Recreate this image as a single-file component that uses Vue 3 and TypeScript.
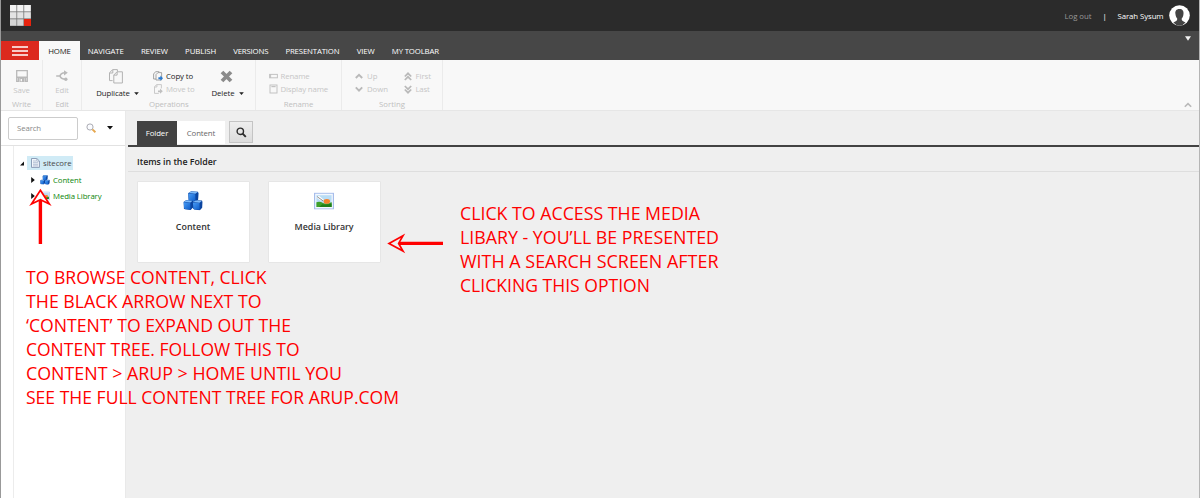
<script setup lang="ts">
import type { Directive } from 'vue'

interface Tab { label: string; width: number }
interface Line { text: string; width: number }

/* Tracks a label so that it spans the given width in pixels. */
const vFit: Directive<HTMLElement, number> = {
  mounted(el, binding) {
    const apply = () => {
      el.style.letterSpacing = '0px'
      const natural = el.getBoundingClientRect().width
      const count = (el.textContent ?? '').length
      const spacing = (binding.value - natural) / count
      el.style.letterSpacing = `${spacing.toFixed(3)}px`
    }
    apply()
    document.fonts.ready.then(apply)
  },
}

const tabs: Tab[] = [
  { label: 'NAVIGATE', width: 36 },
  { label: 'REVIEW', width: 27 },
  { label: 'PUBLISH', width: 31 },
  { label: 'VERSIONS', width: 35 },
  { label: 'PRESENTATION', width: 54 },
  { label: 'VIEW', width: 18 },
  { label: 'MY TOOLBAR', width: 47 },
]

const browseNote: Line[] = [
  { text: 'TO BROWSE CONTENT, CLICK', width: 240.5 },
  { text: 'THE BLACK ARROW NEXT TO', width: 235.5 },
  { text: '‘CONTENT’ TO EXPAND OUT THE', width: 265 },
  { text: 'CONTENT TREE. FOLLOW THIS TO', width: 273.5 },
  { text: 'CONTENT > ARUP > HOME UNTIL YOU', width: 316 },
  { text: 'SEE THE FULL CONTENT TREE FOR ARUP.COM', width: 373 },
]

const mediaNote: Line[] = [
  { text: 'CLICK TO ACCESS THE MEDIA', width: 240 },
  { text: 'LIBARY - YOU’LL BE PRESENTED', width: 259 },
  { text: 'WITH A SEARCH SCREEN AFTER', width: 258.5 },
  { text: 'CLICKING THIS OPTION', width: 190 },
]
</script>

<template>
  <div class="window">
    <svg class="defs" width="0" height="0">
      <defs>
        <linearGradient id="cubeFront" x1="0" y1="0" x2="1" y2="1">
          <stop offset="0" stop-color="#4a9cf5" />
          <stop offset="1" stop-color="#0d5cc8" />
        </linearGradient>
        <symbol id="cube" viewBox="0 0 10 10">
          <path d="M0.3 2 L3 0.2 L9.2 0.6 L9.8 2 L9.4 7.4 L7.2 9.8 L1.6 9.2 L0.7 8.2 Z" fill="#0b45a0" />
          <path d="M0.5 2.3 L6.8 2.9 L7 9.4 L1.6 8.9 L0.9 8 Z" fill="url(#cubeFront)" />
          <path d="M0.8 1.9 L3.1 0.5 L9 0.9 L6.9 2.6 Z" fill="#7dbbfb" />
        </symbol>
        <symbol id="cubes" viewBox="0 0 20 20">
          <use href="#cube" x="4.6" y="0" width="11.4" height="11" />
          <use href="#cube" x="0.2" y="8.8" width="10.4" height="10.4" />
          <use href="#cube" x="9.4" y="8.8" width="10.4" height="10.8" />
        </symbol>
        <symbol id="picture" viewBox="0 0 20 17">
          <rect x="0.6" y="0.6" width="18.8" height="15.8" fill="#f4f8ff" stroke="#a3baea" stroke-width="1.1" />
          <rect x="2.4" y="2.6" width="15.2" height="11.8" fill="#b9ddf5" />
          <path d="M2.4 5 L5 3.2 L10 7.4 L6.5 8 Z" fill="#fff" />
          <path d="M3 4 L9 8.2" stroke="#777" stroke-width="0.8" />
          <path d="M2.4 14.4 V9.6 Q6 8.4 9 10.4 Q14 11.8 17.6 9.4 V14.4 Z" fill="#3fa02a" />
          <ellipse cx="12.8" cy="8.8" rx="3.2" ry="2.4" fill="#f5812a" />
          <path d="M8.4 11.6 Q13.5 12.6 17.6 10.6 V14.4 H5 Z" fill="#217e19" />
        </symbol>
      </defs>
    </svg>

    <header class="topbar">
      <svg class="logo" width="21" height="21" viewBox="0 0 21 21">
        <rect width="21" height="21" fill="#777" />
        <g fill="#f3f3f3">
          <rect x="0" y="0" width="6.4" height="6.4" /><rect x="7.2" y="0" width="6.2" height="6.4" /><rect x="14.2" y="0" width="6.6" height="6.4" />
        </g>
        <g fill="#e3e3e3">
          <rect x="0" y="7.2" width="6.4" height="6.2" /><rect x="7.2" y="7.2" width="6.2" height="6.2" /><rect x="14.2" y="7.2" width="6.6" height="6.2" />
        </g>
        <g fill="#d6d6d6">
          <rect x="0" y="14.3" width="6.4" height="6.4" /><rect x="7.2" y="14.3" width="6.2" height="6.4" />
        </g>
        <rect x="14" y="14" width="7" height="7" fill="#e6240f" />
      </svg>
      <div class="account">
        <span v-fit="27" class="logout">Log out</span>
        <span class="bar">|</span>
        <span v-fit="46" class="user">Sarah Sysum</span>
        <svg class="avatar" width="21" height="21" viewBox="0 0 21 21">
          <circle cx="10.5" cy="10.5" r="10.3" fill="#fff" />
          <path d="M10.4 4 C7.1 4 6 6.3 6.4 8.8 C6.7 11.4 7.4 12.6 8.2 13.6 C8.5 15.4 7.4 16.2 4.4 17.4 Q7 20.6 10.5 20.8 Q14 20.6 16.5 17.4 C13.6 16.2 12.4 15.4 12.7 13.6 C13.6 12.5 14.3 11.4 14.5 8.8 C14.8 6.1 13.6 4 10.4 4 Z" fill="#444" />
        </svg>
      </div>
    </header>

    <nav class="tabbar">
      <button class="menu" aria-label="Menu">
        <svg width="16" height="10" viewBox="0 0 16 10">
          <path d="M0 1 H16 M0 5 H16 M0 9 H16" stroke="#fff" stroke-width="1.5" />
        </svg>
      </button>
      <div class="tab-home"><span v-fit="22.5">HOME</span></div>
      <div class="tabs">
        <span v-for="t in tabs" :key="t.label" v-fit="t.width">{{ t.label }}</span>
      </div>
      <svg class="tabbar-caret" width="6" height="5" viewBox="0 0 6 5"><path d="M0 0.3 H6 L3 4.8 Z" fill="#f2f2f2" /></svg>
    </nav>

    <section class="ribbon">
      <div class="group write">
        <div class="big muted">
          <svg width="12" height="12" viewBox="0 0 12 12">
            <path d="M0.7 0.7 H11.3 V11.3 H9.6 V7.6 H2.4 V11.3 H0.7 Z" fill="#f8f8f8" stroke="#b9b9b9" stroke-width="1.3" />
            <path d="M1 6.4 H11 V8 H1 Z M3.4 8 H8.6 V12 H3.4 Z M4.6 9 V11.2 H6 V9 Z" fill="#b9b9b9" fill-rule="evenodd" />
          </svg>
          <span v-fit="16.5">Save</span>
        </div>
        <div class="caption"><span v-fit="19">Write</span></div>
      </div>
      <div class="group edit">
        <div class="big muted">
          <svg width="12" height="12" viewBox="0 0 12 12">
            <path d="M0.2 6 H4 Q5 2.8 8.8 2.8 M4 6 Q5 9.2 9.6 9.2" fill="none" stroke="#b9b9b9" stroke-width="1.6" />
            <path d="M8 0.2 L11.8 2.8 L8 5.4 Z" fill="#b9b9b9" /><circle cx="9.8" cy="9.2" r="1.7" fill="#b9b9b9" />
          </svg>
          <span v-fit="13.5">Edit</span>
        </div>
        <div class="caption"><span v-fit="13">Edit</span></div>
      </div>
      <div class="group operations">
        <div class="ops">
          <div class="big dark duplicate">
            <svg width="14" height="15" viewBox="0 0 14 15" fill="#f8f8f8" stroke="#b3b3b3" stroke-width="1">
              <path d="M3.6 11.6 H0.5 V3.8 L3.6 0.6 H8.4 V2.6 M0.7 4 H3.8 V0.8" />
              <path d="M8 2.8 H13.4 V14 H4.8 V6 Z M4.9 6.1 H8.1 V2.9" />
            </svg>
            <div class="with-caret">
              <span v-fit="33.5">Duplicate</span>
              <svg width="5" height="3" viewBox="0 0 5 3"><path d="M0.2 0.2 H4.8 L2.5 2.9 Z" fill="#222" /></svg>
            </div>
          </div>
          <div class="stack copy">
            <div class="row dark">
              <svg width="10" height="10" viewBox="0 0 10 10">
                <path d="M3 8 H0.6 V3 L2.6 0.7 H6.3 M5 1.6 H8.6 V9 H3 V3.6 Z" fill="none" stroke="#9a9a9a" stroke-width="0.9" />
                <path d="M5.4 6.2 H7.4 V4.6 L10 7.2 L7.4 9.8 V8.2 H5.4 Z" fill="#2879ce" />
              </svg>
              <span v-fit="27">Copy to</span>
            </div>
            <div class="row muted">
              <svg width="10" height="10" viewBox="0 0 10 10">
                <path d="M5.8 9.4 H1.5 V2.8 L3.6 0.6 H8.4 V4.4 M1.6 3 H3.9 V0.7" fill="none" stroke="#c4c4c4" stroke-width="0.9" />
                <path d="M5 6.4 H7 V4.6 L9.8 7.2 L7 9.8 V8.2 H5 Z" fill="#c0c0c0" />
              </svg>
              <span v-fit="28.5">Move to</span>
            </div>
          </div>
          <div class="big dark delete">
            <svg width="13" height="13" viewBox="0 0 13 13"><path d="M2 2 L11 11 M11 2 L2 11" stroke="#8b8b8b" stroke-width="3.8" /></svg>
            <div class="with-caret">
              <span v-fit="23">Delete</span>
              <svg width="5" height="3" viewBox="0 0 5 3"><path d="M0.2 0.2 H4.8 L2.5 2.9 Z" fill="#222" /></svg>
            </div>
          </div>
        </div>
        <div class="caption"><span v-fit="39.5">Operations</span></div>
      </div>
      <div class="group rename">
        <div class="stack">
          <div class="row muted">
            <svg width="9" height="10" viewBox="0 0 9 10"><rect x="0.6" y="3.4" width="7.8" height="3.4" fill="none" stroke="#c2c2c2" stroke-width="1" /><path d="M1.6 3 V7" stroke="#c2c2c2" /></svg>
            <span v-fit="29">Rename</span>
          </div>
          <div class="row muted">
            <svg width="9" height="10" viewBox="0 0 9 10"><rect x="1" y="1" width="7" height="8" fill="none" stroke="#c2c2c2" stroke-width="1" /><path d="M2.4 2.6 H6.6" stroke="#c2c2c2" stroke-width="1.2" /></svg>
            <span v-fit="47.5">Display name</span>
          </div>
        </div>
        <div class="caption"><span v-fit="29.5">Rename</span></div>
      </div>
      <div class="group sorting">
        <div class="sort">
          <div class="stack">
            <div class="row muted">
              <svg width="8" height="8" viewBox="0 0 8 8"><path d="M0.8 6 L4 2.8 L7.2 6" fill="none" stroke="#b9b9b9" stroke-width="1.9" /></svg>
              <span v-fit="10.5">Up</span>
            </div>
            <div class="row muted">
              <svg width="8" height="8" viewBox="0 0 8 8"><path d="M0.8 2.4 L4 5.6 L7.2 2.4" fill="none" stroke="#b9b9b9" stroke-width="1.9" /></svg>
              <span v-fit="21">Down</span>
            </div>
          </div>
          <div class="stack">
            <div class="row muted">
              <svg width="8" height="9" viewBox="0 0 8 9"><path d="M0.8 4.5 L4 1.3 L7.2 4.5 M0.8 8 L4 4.8 L7.2 8" fill="none" stroke="#b9b9b9" stroke-width="1.7" /></svg>
              <span v-fit="15.5">First</span>
            </div>
            <div class="row muted">
              <svg width="8" height="9" viewBox="0 0 8 9"><path d="M0.8 1 L4 4.2 L7.2 1 M0.8 4.5 L4 7.7 L7.2 4.5" fill="none" stroke="#b9b9b9" stroke-width="1.7" /></svg>
              <span v-fit="14">Last</span>
            </div>
          </div>
        </div>
        <div class="caption"><span v-fit="26">Sorting</span></div>
      </div>
      <svg class="collapse" width="8" height="6" viewBox="0 0 8 6"><path d="M0.8 4.8 L4 1.6 L7.2 4.8" fill="none" stroke="#b9b9b9" stroke-width="1.6" /></svg>
    </section>

    <div class="body">
      <aside class="sidebar">
        <div class="searchbar">
          <div class="search-input"><span v-fit="24">Search</span></div>
          <svg class="glass" width="11" height="11" viewBox="0 0 11 11">
            <circle cx="4" cy="4" r="3.1" fill="#fbfcff" stroke="#a0a2aa" stroke-width="0.9" />
            <path d="M6.4 6.4 L9.4 9.2" stroke="#e6a74e" stroke-width="1.9" />
          </svg>
          <svg class="options" width="6" height="4" viewBox="0 0 6 4"><path d="M0 0 H6 L3 3.6 Z" fill="#111" /></svg>
        </div>
        <div class="tree">
          <div class="node root">
            <svg class="toggle" width="4" height="5" viewBox="0 0 4 5"><path d="M4 0.4 V4.6 H0 Z" fill="#111" /></svg>
            <div class="selected">
              <svg width="9" height="10" viewBox="0 0 9 10">
                <path d="M0.5 0.5 H5.8 L8.4 3 V9.4 H0.5 Z" fill="#f4f7fc" stroke="#8294b0" stroke-width="0.9" />
                <path d="M2 3 H5 M2 4.7 H7 M2 6.3 H7 M2 7.9 H7 M5.7 0.7 V3.2 H8.2" fill="none" stroke="#9aabc4" stroke-width="0.7" />
              </svg>
              <span v-fit="28.5">sitecore</span>
            </div>
          </div>
          <div class="node child">
            <svg class="toggle" width="4" height="6" viewBox="0 0 4 6"><path d="M0.2 0 L3.8 3 L0.2 6 Z" fill="#111" /></svg>
            <svg width="10" height="10"><use href="#cubes" width="10" height="10" /></svg>
            <span v-fit="28.5">Content</span>
          </div>
          <div class="node child">
            <svg class="toggle" width="4" height="6" viewBox="0 0 4 6"><path d="M0.2 0 L3.8 3 L0.2 6 Z" fill="#111" /></svg>
            <svg width="10" height="10"><use href="#picture" width="10" height="10" /></svg>
            <span v-fit="48.5">Media Library</span>
          </div>
        </div>
      </aside>

      <main class="content">
        <div class="editor-tabs">
          <div class="etab active"><span v-fit="22.5">Folder</span></div>
          <div class="etab"><span v-fit="28.5">Content</span></div>
          <button class="find" aria-label="Search">
            <svg width="11" height="11" viewBox="0 0 11 11"><circle cx="4.3" cy="4.3" r="3.2" fill="none" stroke="#2c2c2c" stroke-width="1.4" /><path d="M6.6 6.6 L9.8 9.8" stroke="#2c2c2c" stroke-width="1.9" /></svg>
          </button>
        </div>
        <h2 class="heading"><span v-fit="79.5">Items in the Folder</span></h2>
        <div class="cards">
          <div class="card">
            <svg class="card-icon" width="20" height="20"><use href="#cubes" width="20" height="20" /></svg>
            <span v-fit="34.5">Content</span>
          </div>
          <div class="card">
            <svg class="card-icon" width="20" height="20"><use href="#picture" y="1.6" width="20" height="17" /></svg>
            <span v-fit="59">Media Library</span>
          </div>
        </div>
      </main>
    </div>

    <svg class="notes" width="1200" height="498" viewBox="0 0 1200 498">
      <g class="note">
        <text v-for="(l, i) in browseNote" :key="l.text" x="26" :y="284 + i * 24" :textLength="l.width" lengthAdjust="spacingAndGlyphs">{{ l.text }}</text>
      </g>
      <g class="note">
        <text v-for="(l, i) in mediaNote" :key="l.text" x="460" :y="220 + i * 24" :textLength="l.width" lengthAdjust="spacingAndGlyphs">{{ l.text }}</text>
      </g>
      <g class="arrow">
        <path d="M40.4 190.3 L49.3 204 L40.4 199.8 L31.5 204 Z" /><path class="shaft" d="M40.4 200 V244" />
        <path class="on-grey" d="M389 243.4 L403 235.8 L398.6 243.4 L403 251 Z" /><path class="shaft" d="M399 243.4 H443" />
      </g>
    </svg>
  </div>
</template>

<style>
body { margin: 0; overflow: hidden; }
</style>

<style scoped>
.window {
  position: relative;
  box-sizing: border-box;
  width: 1200px;
  height: 498px;
  display: flex;
  flex-direction: column;
  border-left: 1px solid #999;
  border-right: 1px solid #b5b5b5;
  background: #efefef;
  overflow: hidden;
  font-family: "Open Sans", "Noto Sans", sans-serif;
  font-size: 7.8px;
  line-height: 10px;
  white-space: nowrap;
}
.window * { box-sizing: border-box; }
.window svg { display: block; flex: none; }
.window svg.defs { position: absolute; }
button { border: 0; padding: 0; display: flex; align-items: center; justify-content: center; }

.topbar {
  flex: none;
  height: 31px;
  display: flex;
  justify-content: space-between;
  padding: 5px 9px 0 9px;
  background: #2b2b2b;
}
.account { display: flex; align-items: center; height: 21px; color: #fff; }
.logout { color: #999; }
.bar { width: 4px; margin: 0 11px; text-align: center; }
.avatar { margin-left: 5.5px; }

.tabbar { flex: none; height: 29px; display: flex; align-items: flex-end; background: #474747; color: #fff; }
.menu { width: 38px; height: 19px; background: #dc291e; }
.tab-home { width: 41px; height: 19px; display: flex; align-items: center; justify-content: center; background: #f8f8f8; color: #222; }
.tabs { flex: 1; height: 19px; display: flex; align-items: center; gap: 17.2px; padding-left: 7.7px; }
.tabbar-caret { align-self: flex-start; margin: 5px 8px 0 0; }

.ribbon { position: relative; flex: none; height: 51px; display: flex; background: #f8f8f8; border-bottom: 1px solid #e6e6e6; }
.group { height: 50px; border-right: 1px solid #ebebeb; display: flex; flex-direction: column; justify-content: space-between; padding-bottom: 1px; }
.write { width: 42px; }
.edit { width: 39px; }
.operations { width: 174px; }
.rename { width: 86px; }
.sorting { width: 101px; }
.caption { height: 10px; display: flex; justify-content: center; color: #bfbfbf; }
.operations .caption { justify-content: flex-start; padding-left: 67px; }
.muted { color: #c6c6c6; }
.dark { color: #222; }
.big { height: 36px; padding-top: 10px; display: flex; flex-direction: column; align-items: center; gap: 3px; }
.ops { display: flex; height: 38px; }
.duplicate { width: 43px; margin-left: 14px; padding-top: 9px; gap: 4px; }
.duplicate > svg { margin-right: 3px; }
.delete { width: 33px; margin-left: 16px; padding-top: 10px; gap: 5px; }
.delete > svg { margin-right: 3px; }
.with-caret { display: flex; align-items: center; gap: 4px; }
.stack { display: flex; flex-direction: column; gap: 3px; padding-top: 11px; }
.copy { margin-left: 14px; width: 42px; }
.row { height: 10px; display: flex; align-items: center; gap: 3px; }
.rename .stack { padding-left: 12.5px; }
.sort { display: flex; gap: 15.5px; padding-left: 13px; }
.sort .row { gap: 4px; }
.collapse { position: absolute; right: 7px; bottom: 2px; }

.body { flex: 1; display: flex; min-height: 0; }
.sidebar { width: 125px; display: flex; flex-direction: column; background: #fff; border-right: 1px solid #e9e9e9; }
.searchbar { flex: none; height: 35px; display: flex; align-items: center; padding-left: 7px; border-bottom: 1px solid #e2e2e2; }
.search-input { width: 70px; height: 23px; display: flex; align-items: center; padding-left: 8px; border: 1px solid #ccc; border-radius: 2px; color: #888; }
.glass { margin: 0 10px 0 8px; }
.tree { flex: 1; margin-left: 12px; border-left: 1px solid #ececec; padding-top: 10px; }
.node { display: flex; align-items: center; color: #0b850b; }
.root { height: 14px; padding-left: 6px; color: #474747; margin-bottom: 2px; }
.selected { height: 14px; width: 46px; margin-left: 3px; padding-left: 3.5px; display: flex; align-items: center; gap: 3.5px; background: #d0ebf6; }
.child { height: 16px; padding-left: 17px; }
.child > svg + svg { margin: 0 3px 0 5px; }

.content { flex: 1; min-width: 0; margin-left: 2px; }
.editor-tabs { height: 36px; padding: 10px 0 0 9px; display: flex; border-bottom: 2px solid #424242; }
.etab { width: 48px; height: 23px; display: flex; align-items: center; justify-content: center; padding-top: 1px; background: #fff; color: #666; }
.etab.active { width: 40px; height: 24px; padding-top: 0; background: #424242; color: #fff; }
.find { width: 24px; height: 22px; margin-left: 4px; border: 1px solid #c4c4c4; background: linear-gradient(#eee, #dcdcdc); }
.heading { margin: 0; height: 25px; padding: 10px 0 0 9px; border-bottom: 1px solid #dedede; color: #222; font-size: 8.8px; font-weight: 600; line-height: 11px; }
.cards { display: flex; gap: 18px; padding: 9px 0 0 8.6px; }
.card { width: 113px; height: 82px; display: flex; flex-direction: column; align-items: center; border: 1px solid #e6e6e6; border-radius: 1px; background: #fff; color: #333; font-size: 8.9px; font-weight: 600; line-height: 12px; }
.card-icon { margin: 9px 0 10px; }

.notes { position: absolute; left: -1px; top: 0; pointer-events: none; }
.note { font-family: "Open Sans", "Noto Sans", sans-serif; font-size: 19px; fill: #f00; white-space: pre; }
.arrow path { fill: #fff; stroke: #f00; stroke-width: 1.7; stroke-linejoin: miter; }
.arrow path.on-grey { fill: #efefef; }
.arrow path.shaft { stroke-width: 3.4; }
</style>
